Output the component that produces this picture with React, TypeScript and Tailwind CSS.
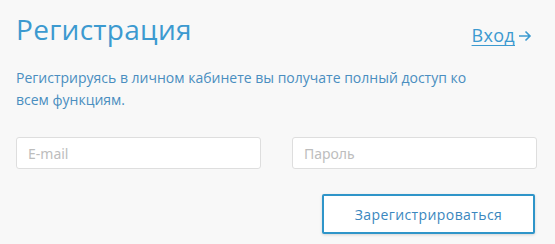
import React from 'react';

const App = () => {
  return (
    <div className="w-[555px] h-[244px] bg-[#f8f8f8] pl-[16px] pr-[18px] pt-[10px] font-['Open_Sans',sans-serif]">
      <div className="flex items-start justify-between">
        <h1 className="text-[28px] leading-[38px] text-[#3c9ad0] font-normal tracking-[0.3px]">Регистрация</h1>
        <a href="#" className="mt-[12px] mr-[5px] flex items-center text-[18px] text-[#3c9ad0]">
          <span className="underline underline-offset-[3px] tracking-[0.3px]">Вход</span>
          <svg width="14" height="14" viewBox="0 0 14 14" className="ml-[3px]" fill="none" stroke="currentColor" strokeWidth="1.6">
            <path d="M1 7h11M7.5 2.5 12 7l-4.5 4.5" />
          </svg>
        </a>
      </div>
      <p className="mt-[18px] text-[14px] leading-[22px] text-[#4a8ec0] pr-[60px]">
        Регистрируясь в личном кабинете вы получате полный доступ ко всем функциям.
      </p>
      <div className="mt-[26px] grid grid-cols-2 gap-[31px]">
        <input placeholder="E-mail" className="h-[32px] bg-white border border-[#dedede] rounded-[3px] px-[11px] text-[14px] placeholder:text-[#bdbdbd] outline-none font-['Noto_Sans',sans-serif]" />
        <input placeholder="Пароль" className="h-[32px] bg-white border border-[#dedede] rounded-[3px] px-[11px] text-[14px] placeholder:text-[#bdbdbd] outline-none font-['Noto_Sans',sans-serif]" />
      </div>
      <div className="mt-[25px] flex justify-end pr-[2px]">
        <button className="w-[213px] h-[40px] bg-white border-2 border-[#2f95c9] rounded-[2px] shadow-[0_1px_3px_rgba(0,0,0,0.15)] text-[14px] tracking-[0.4px] text-[#3a87be]">
          Зарегистрироваться
        </button>
      </div>
    </div>
  );
};

export default App;
